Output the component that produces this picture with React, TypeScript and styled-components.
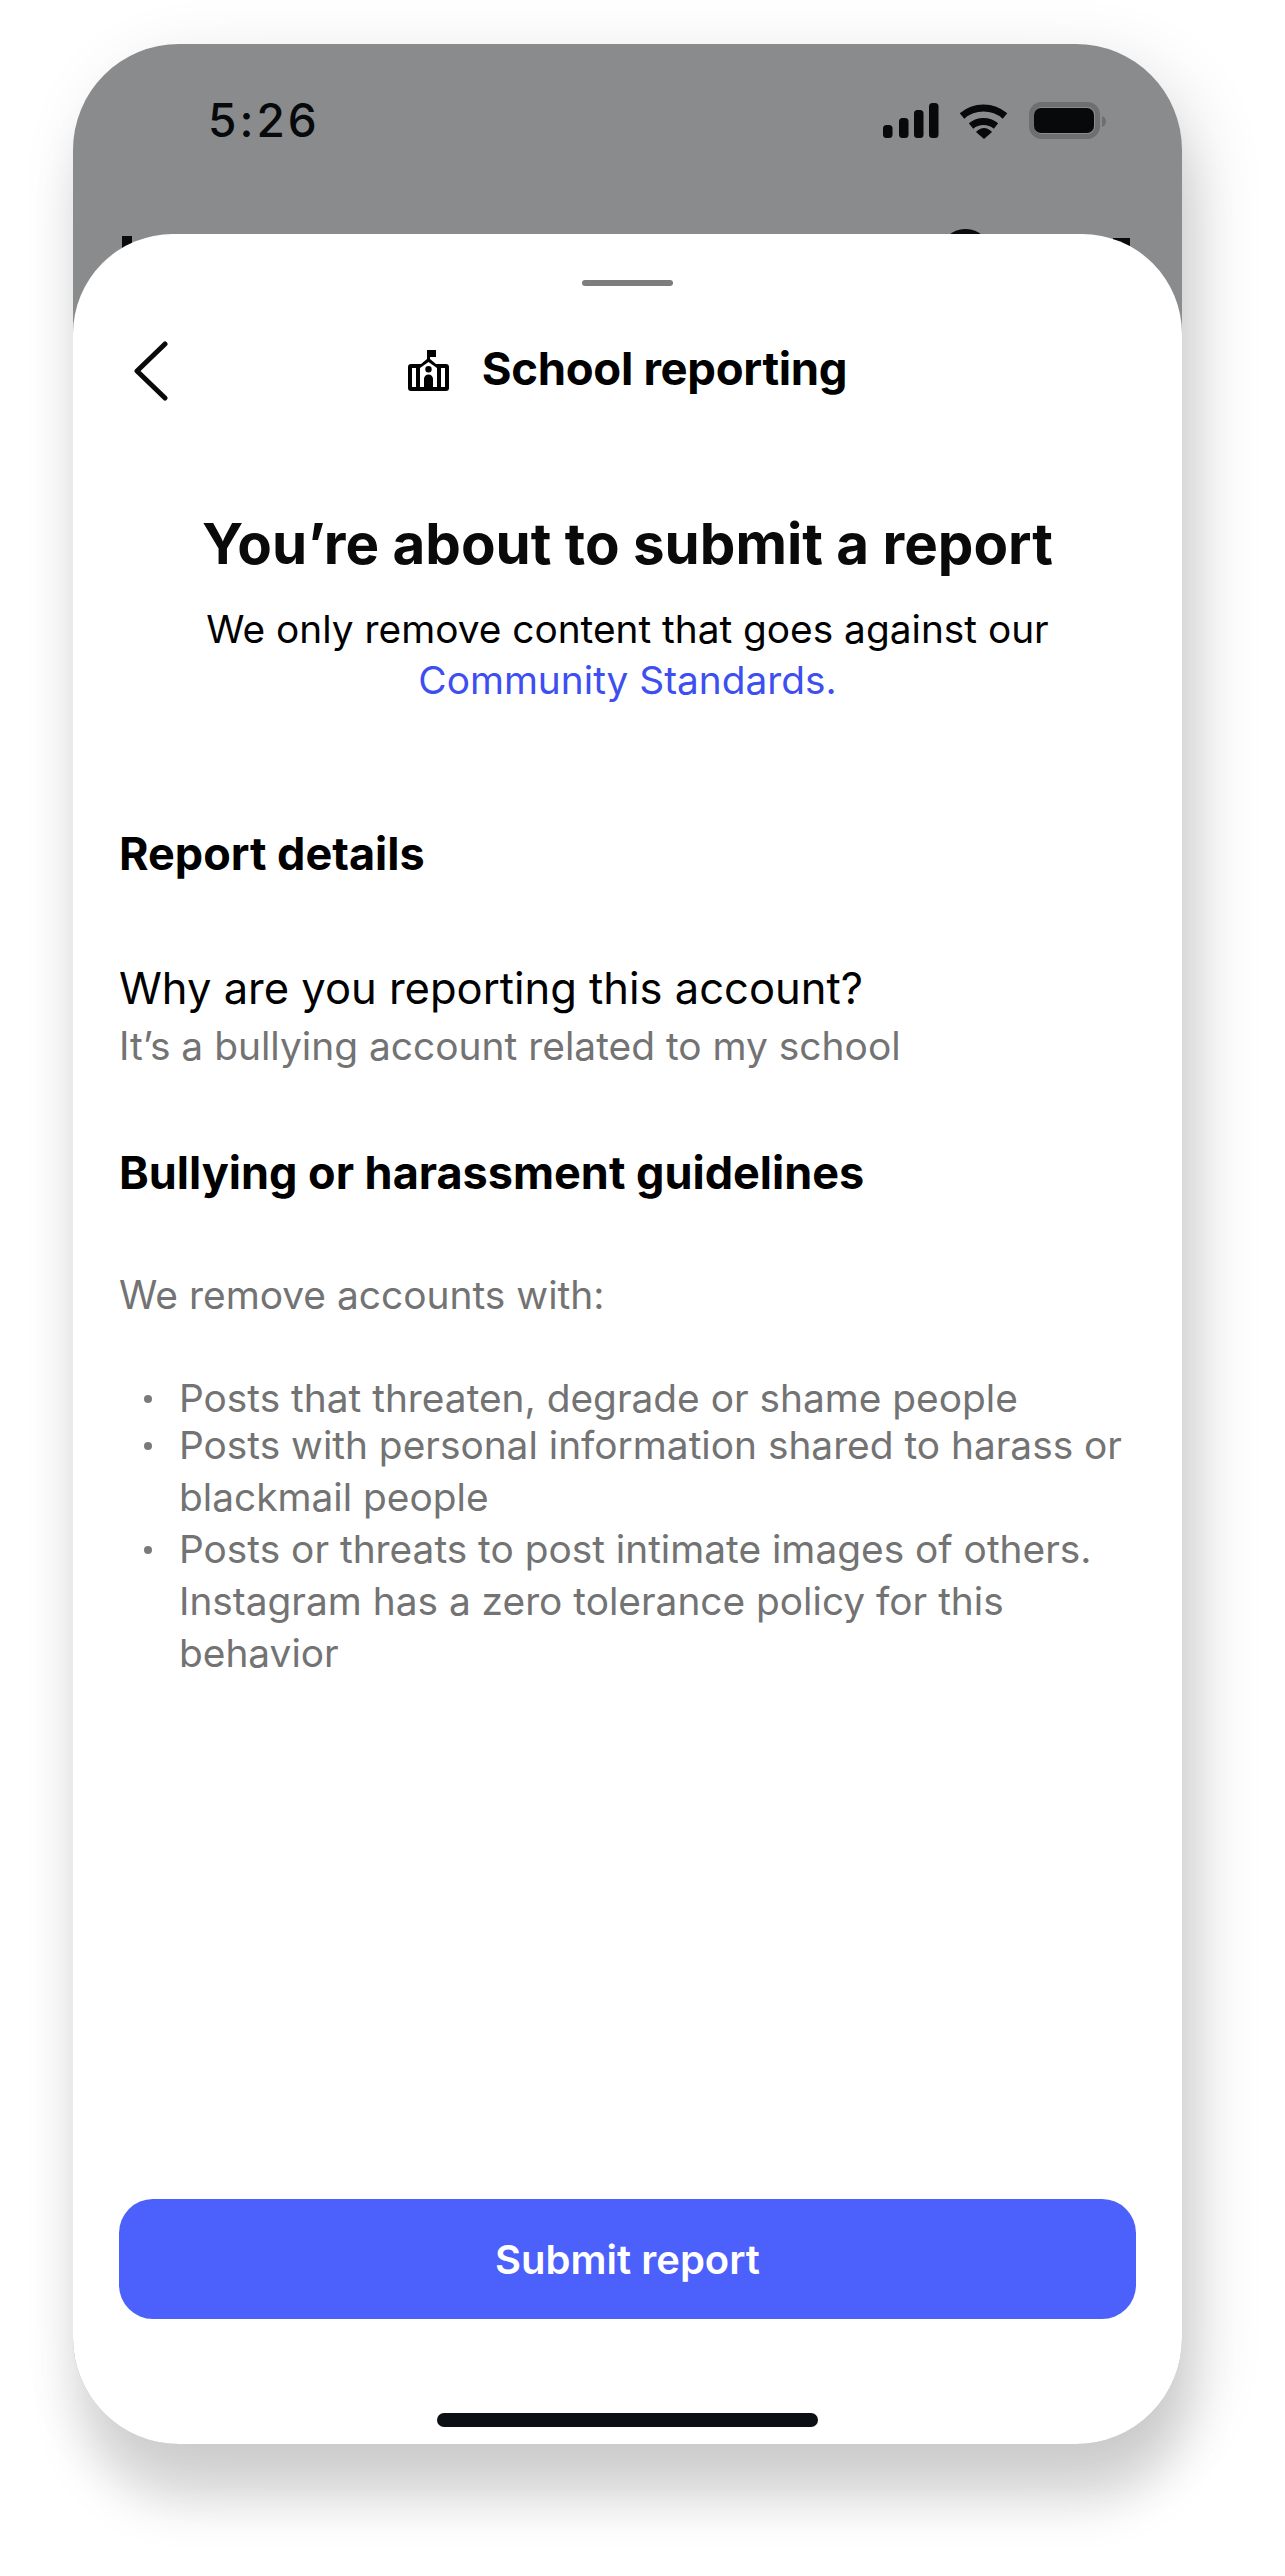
import React from 'react';
import styled, { createGlobalStyle } from 'styled-components';

const GlobalStyle = createGlobalStyle`
  html, body {
    margin: 0;
    padding: 0;
    background: #ffffff;
  }
  body {
    font-family: Inter, "Liberation Sans", sans-serif;
    -webkit-font-smoothing: antialiased;
  }
`;

const Page = styled.div`
  width: 1285px;
  height: 2576px;
  padding: 44px 0 0 73px;
  box-sizing: border-box;
  overflow: hidden;
`;

const PhoneShadow = styled.div`
  width: 1109px;
  height: 2400px;
  border-radius: 106px;
  box-shadow:
    6px 60px 50px rgba(0, 0, 0, 0.13),
    16px 18px 70px rgba(0, 0, 0, 0.12);
`;

const Phone = styled.div`
  width: 1109px;
  height: 2400px;
  border-radius: 106px;
  background: #8a8b8d;
  overflow: hidden;
  display: flex;
  flex-direction: column;
`;

const StatusBar = styled.div`
  height: 160px;
  flex: none;
  box-sizing: border-box;
  padding: 0 75px 0 135px;
  display: flex;
  align-items: flex-start;
  justify-content: space-between;
`;

const Clock = styled.div`
  margin-top: 48px;
  font-size: 46px;
  line-height: 56px;
  font-weight: 500;
  letter-spacing: 3px;
  color: #08090b;
`;

const StatusIcons = styled.svg`
  margin-top: 58px;
  display: block;
`;

// the page behind the sheet, only what its corners leave open shows
const BehindRow = styled.div`
  height: 60px;
  margin-bottom: -30px;
  flex: none;
  display: flex;
  align-items: flex-start;
  padding-left: 49px;
`;

const BehindMark = styled.div<{ $width: number; $top: number; $left: number; $round?: boolean }>`
  width: ${(p) => p.$width}px;
  height: 26px;
  margin: ${(p) => p.$top}px 0 0 ${(p) => p.$left}px;
  background: #0a0b0d;
  border-radius: ${(p) => (p.$round ? '24px 24px 0 0' : '0')};
`;

const Sheet = styled.div`
  flex: 1;
  position: relative;
  background: #ffffff;
  border-radius: 100px 100px 0 0;
  box-sizing: border-box;
  padding: 46px 46px 17px;
  display: flex;
  flex-direction: column;
`;

const Grabber = styled.div`
  align-self: center;
  width: 91px;
  height: 6px;
  border-radius: 3px;
  background: #7d7d7d;
  flex: none;
`;

const NavRow = styled.div`
  margin-top: 54px;
  height: 60px;
  flex: none;
  display: flex;
  align-items: center;
  justify-content: center;
  position: relative;
`;

const BackIcon = styled.svg`
  position: absolute;
  left: 14px;
  top: 1px;
`;

const NavTitle = styled.div`
  margin-left: 33px;
  padding-bottom: 2px;
  font-size: 45.500px;
  font-weight: 700;
  line-height: 58px;
  letter-spacing: -0.3px;
  color: #000000;
`;

const Heading = styled.h1`
  margin: 110px 0 0;
  font-size: 56.500px;
  line-height: 68px;
  font-weight: 700;
  text-align: center;
  color: #0a0a0b;
`;

const Subheading = styled.p`
  margin: 25px 0 0;
  font-size: 38.800px;
  line-height: 51px;
  font-weight: 400;
  text-align: center;
  color: #000000;
`;

const BlueLink = styled.a`
  display: block;
  color: #3d4ff0;
`;

const SectionTitle = styled.h2<{ $top: number }>`
  margin: ${(p) => p.$top}px 0 0;
  font-size: 45px;
  line-height: 56px;
  font-weight: 700;
  color: #000000;
`;

const Question = styled.div`
  margin-top: 78px;
  font-size: 43.500px;
  line-height: 56px;
  color: #000000;
`;

const MutedText = styled.div<{ $top: number }>`
  margin-top: ${(p) => p.$top}px;
  font-size: 38.900px;
  line-height: 51px;
  color: #737373;
`;

const BulletList = styled.ul`
  margin: 52px 0 0;
  padding: 0 0 0 60px;
  list-style: none;
  font-size: 38.850px;
  line-height: 52px;
  color: #737373;
`;

const BulletItem = styled.li<{ $tight?: boolean }>`
  position: relative;
  margin-bottom: ${(p) => (p.$tight ? '-5px' : '0')};
  &::before {
    content: '';
    position: absolute;
    left: -35px;
    top: 23px;
    width: 8px;
    height: 8px;
    border-radius: 50%;
    background: #7a7a7a;
  }
`;

const Spacer = styled.div`
  flex: 1;
`;

const SubmitButton = styled.button`
  flex: none;
  width: 100%;
  height: 120px;
  border: none;
  border-radius: 34px;
  background: #4c60fb;
  color: #ffffff;
  font-family: inherit;
  font-size: 40px;
  font-weight: 600;
`;

const HomeBar = styled.div`
  flex: none;
  align-self: center;
  margin-top: 94px;
  width: 381px;
  height: 14px;
  border-radius: 7px;
  background: #0c0f13;
`;

export default function App() {
  return (
    <Page>
      <GlobalStyle />
      <PhoneShadow>
        <Phone>
          <StatusBar>
            <Clock>5:26</Clock>
            <StatusIcons width="224" height="38" viewBox="0 0 224 38" fill="none">
              <rect x="0" y="23" width="9.500" height="13" rx="3.500" fill="#08090b" />
              <rect x="16" y="16" width="9.500" height="20" rx="3.500" fill="#08090b" />
              <rect x="31" y="8" width="9.500" height="28" rx="3.500" fill="#08090b" />
              <rect x="46" y="1" width="9.500" height="35" rx="3.500" fill="#08090b" />
              <path d="M79 14A33 33 0 0 1 122 14" stroke="#08090b" strokeWidth="7" />
              <path d="M88 24A20 20 0 0 1 113 24" stroke="#08090b" strokeWidth="7" />
              <path d="M93 30Q101 22 109 30L101 37Z" fill="#08090b" />
              <rect x="148.500" y="2.500" width="66" height="32" rx="10" stroke="#6e6f71" strokeWidth="5" />
              <rect x="151" y="6" width="60" height="25" rx="7" fill="#08090b" />
              <path d="M219 14c3 1 4 3 4 5.500s-1 4.500-4 5.500z" fill="#6e6f71" />
            </StatusIcons>
          </StatusBar>
          <BehindRow>
            <BehindMark $left={0} $top={32} $width={10} />
            <BehindMark $left={809} $top={25} $width={49} $round />
            <BehindMark $left={123} $top={34} $width={17} />
          </BehindRow>
          <Sheet>
            <Grabber />
            <NavRow>
              <BackIcon width="36" height="60" viewBox="0 0 36 60" fill="none">
                <path d="M32 3L4 30l28 27" stroke="#0a0a0b" strokeWidth="5" strokeLinecap="round" strokeLinejoin="round" />
              </BackIcon>
              <svg width="41" height="41" viewBox="0 0 41 41" fill="#000000">
                <path
                  fillRule="evenodd"
                  d="M19 0h9v7h-6v2l6 5h10a3 3 0 0 1 3 3v21a3 3 0 0 1-3 3H3a3 3 0 0 1-3-3V17a3 3 0 0 1 3-3h10l6-5zM4 18v19h4V18zM33 18v19h4V18zM20.500 12L12 18v19h4v-8a4.500 4.500 0 0 1 9 0v8h4V18zM20.500 16a3.200 3.200 0 1 1 0 6.400 3.200 3.200 0 0 1 0-6.400z"
                />
              </svg>
              <NavTitle>School reporting</NavTitle>
            </NavRow>
            <Heading>You’re about to submit a report</Heading>
            <Subheading>
              We only remove content that goes against our
              <BlueLink>Community Standards.</BlueLink>
            </Subheading>
            <SectionTitle $top={121}>Report details</SectionTitle>
            <Question>Why are you reporting this account?</Question>
            <MutedText $top={4}>It’s a bullying account related to my school</MutedText>
            <SectionTitle $top={74}>Bullying or harassment guidelines</SectionTitle>
            <MutedText $top={68}>We remove accounts with:</MutedText>
            <BulletList>
              <BulletItem $tight>Posts that threaten, degrade or shame people</BulletItem>
              <BulletItem>Posts with personal information shared to harass or blackmail people</BulletItem>
              <BulletItem>Posts or threats to post intimate images of others. Instagram has a zero tolerance policy for this behavior</BulletItem>
            </BulletList>
            <Spacer />
            <SubmitButton>Submit report</SubmitButton>
            <HomeBar />
          </Sheet>
        </Phone>
      </PhoneShadow>
    </Page>
  );
}
